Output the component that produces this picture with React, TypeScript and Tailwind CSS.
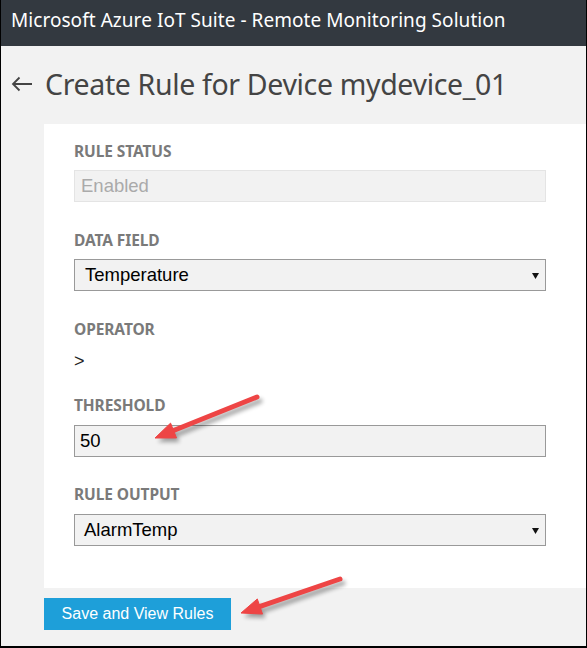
import React from "react";

const seg = { fontFamily: '"Noto Sans", "Open Sans", sans-serif' };
const arial = { fontFamily: '"Liberation Sans", Arial, sans-serif' };

function Label({ children }: { children: React.ReactNode }) {
  return (
    <div className="text-[15.5px] font-bold leading-[18px] text-[#7a7a7a] tracking-[-0.1px]" style={seg}>
      {children}
    </div>
  );
}

function Caret() {
  return (
    <svg width="7" height="6" viewBox="0 0 7 6" className="absolute right-[6px] top-[13px]">
      <path d="M0 0 H7 L3.5 6 Z" fill="#111" />
    </svg>
  );
}

function Arrow({ x1, y1, x2, y2 }: { x1: number; y1: number; x2: number; y2: number }) {
  const dx = x2 - x1;
  const dy = y2 - y1;
  const len = Math.sqrt(dx * dx + dy * dy);
  const ux = dx / len;
  const uy = dy / len;
  const hl = 20;
  const hw = 8;
  const bx = x2 - ux * hl;
  const by = y2 - uy * hl;
  const p1 = `${bx - uy * hw},${by + ux * hw}`;
  const p2 = `${bx + uy * hw},${by - ux * hw}`;
  return (
    <g>
      <g transform="translate(3,4)" opacity="0.35" filter="url(#blur)">
        <line x1={x1} y1={y1} x2={bx} y2={by} stroke="#000" strokeWidth="5" strokeLinecap="round" />
        <polygon points={`${x2},${y2} ${p1} ${p2}`} fill="#000" />
      </g>
      <line x1={x1} y1={y1} x2={bx + ux * 2} y2={by + uy * 2} stroke="#ee4545" strokeWidth="5" strokeLinecap="round" />
      <polygon points={`${x2},${y2} ${p1} ${p2}`} fill="#ee4545" strokeLinejoin="round" stroke="#ee4545" strokeWidth="1" />
    </g>
  );
}

export default function App() {
  return (
    <div className="relative w-[587px] h-[648px] bg-[#f2f2f2] border-x border-b-2 border-black overflow-hidden box-border">
      <div className="h-[46px] bg-[#333940] flex items-center pl-[10px] pb-[6px]">
        <span className="text-white text-[19px] leading-none tracking-[0.05px]" style={seg}>
          Microsoft Azure IoT Suite - Remote Monitoring Solution
        </span>
      </div>
      <div className="flex items-center h-[78px] pl-[10px] pb-[2px]">
        <svg width="22" height="16" viewBox="0 0 22 16" className="mr-[12px]">
          <path d="M21 8 H2 M8.5 1.5 L2 8 L8.5 14.5" stroke="#444" strokeWidth="1.8" fill="none" />
        </svg>
        <span className="text-[#444] text-[28.5px] leading-none tracking-[-0.35px]" style={seg}>
          Create Rule for Device mydevice_01
        </span>
      </div>
      <div className="ml-[43px] bg-white pl-[30px] pr-[40px] pt-[18px] pb-[42px] flex flex-col">
        <Label>RULE STATUS</Label>
        <div className="mt-[10px] h-[32px] bg-[#f2f2f2] border border-[#e4e4e4] flex items-center px-[6px] text-[18.5px] text-[#aaaaaa]" style={arial}>
          Enabled
        </div>
        <div className="mt-[29px]"><Label>DATA FIELD</Label></div>
        <div className="relative mt-[10px] h-[32px] bg-[#f2f2f2] border border-[#999] flex items-center px-[10px] text-[18.5px] text-black" style={arial}>
          Temperature
          <Caret />
        </div>
        <div className="mt-[29px]"><Label>OPERATOR</Label></div>
        <div className="mt-[12px] h-[22px] text-[18px] text-[#222] leading-[22px]" style={arial}>&gt;</div>
        <div className="mt-[24px]"><Label>THRESHOLD</Label></div>
        <div className="mt-[11px] h-[32px] bg-[#f2f2f2] border border-[#999] flex items-center px-[5px] text-[18.5px] text-black" style={arial}>
          50
        </div>
        <div className="mt-[28px]"><Label>RULE OUTPUT</Label></div>
        <div className="relative mt-[11px] h-[32px] bg-[#f2f2f2] border border-[#999] flex items-center px-[9px] text-[18.5px] text-black" style={arial}>
          AlarmTemp
          <Caret />
        </div>
      </div>
      <div className="ml-[43px] mt-[10px]">
        <button className="w-[187px] h-[32px] bg-[#1e9fd9] text-white text-[16px]" style={arial}>
          Save and View Rules
        </button>
      </div>
      <svg className="absolute left-0 top-0 pointer-events-none" width="587" height="648">
        <defs>
          <filter id="blur" x="-20%" y="-20%" width="140%" height="140%">
            <feGaussianBlur stdDeviation="2" />
          </filter>
        </defs>
        <Arrow x1={256} y1={397} x2={154} y2={438} />
        <Arrow x1={339} y1={579} x2={240} y2={613} />
      </svg>
    </div>
  );
}
